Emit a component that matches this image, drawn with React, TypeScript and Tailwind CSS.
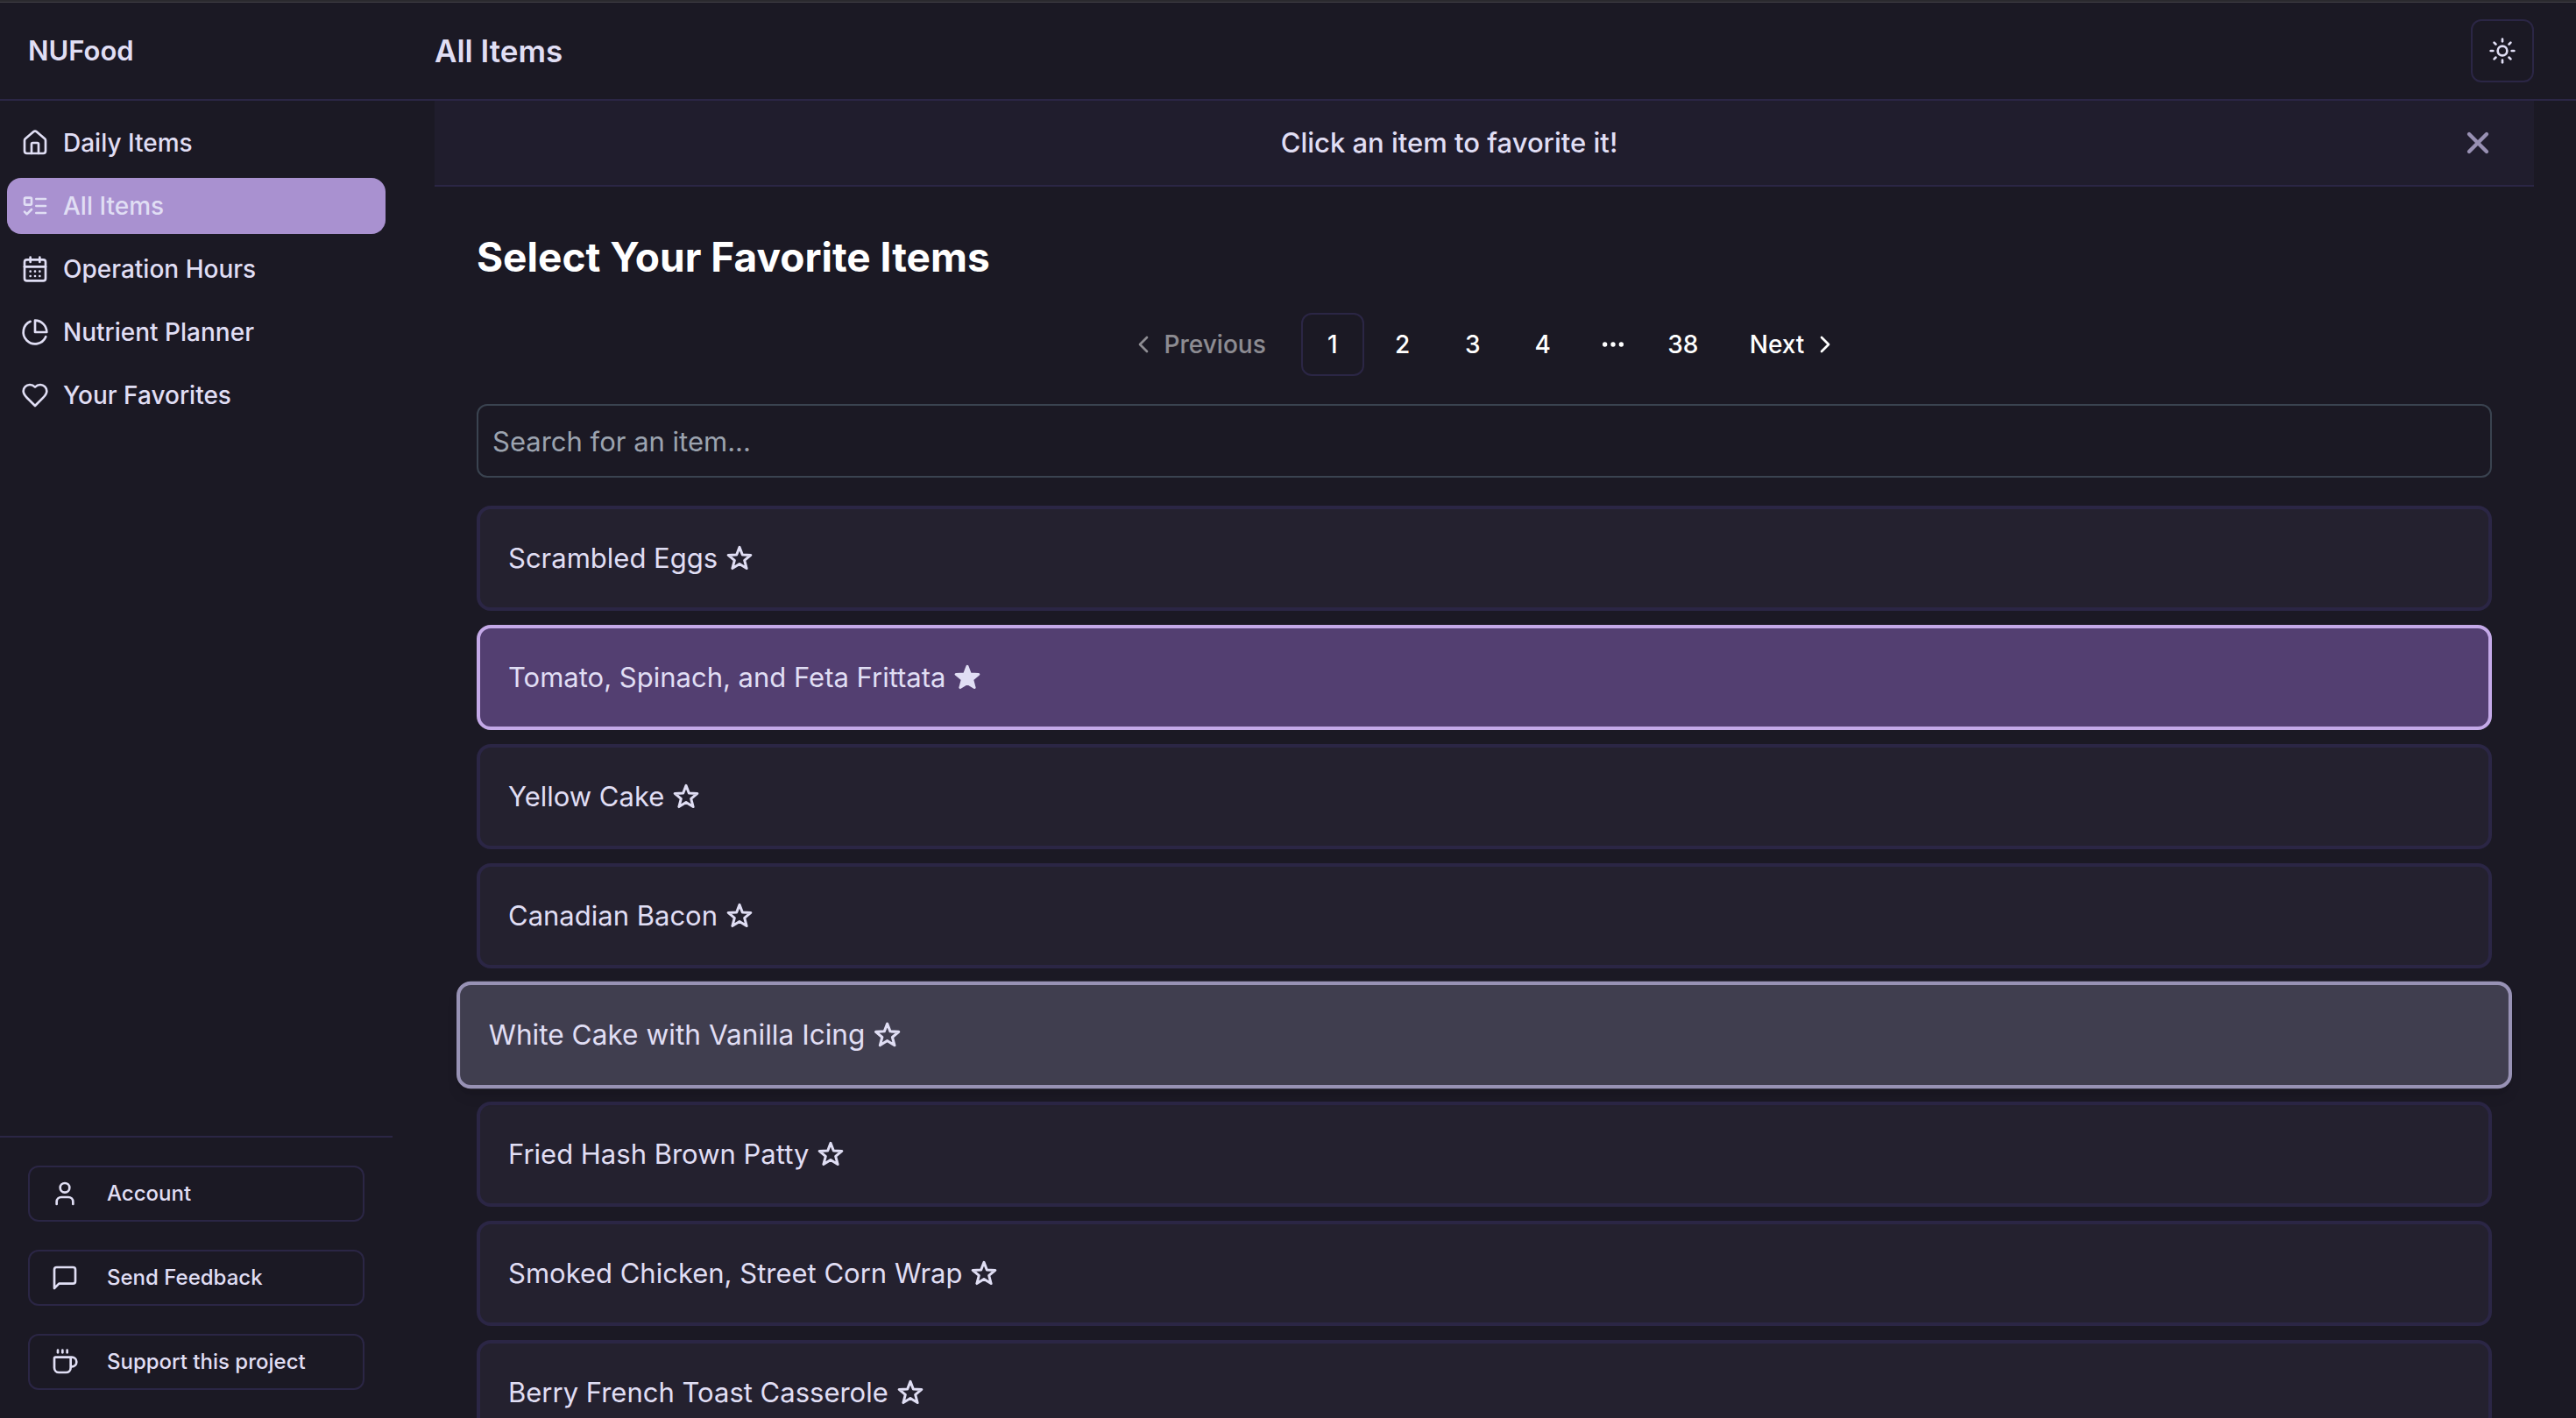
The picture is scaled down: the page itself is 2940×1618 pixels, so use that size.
import { useState, type ComponentType, type ReactNode } from "react";
import {
  CalendarDays,
  ChevronLeft,
  ChevronRight,
  Coffee,
  Ellipsis,
  House,
  Sun,
  User,
  X,
} from "lucide-react";

type IconType = ComponentType<{ className?: string }>;

function Outline({ className, children }: { className?: string; children: ReactNode }) {
  return (
    <svg
      viewBox="0 0 24 24"
      fill="none"
      stroke="currentColor"
      strokeWidth={2}
      strokeLinecap="round"
      strokeLinejoin="round"
      aria-hidden="true"
      className={className}
    >
      {children}
    </svg>
  );
}

const ListTodo: IconType = ({ className }) => (
  <Outline className={className}>
    <rect x="3" y="5" width="6" height="6" rx="1" />
    <path d="m3 17 2 2 4-4" />
    <path d="M13 6h8" />
    <path d="M13 12h8" />
    <path d="M13 18h8" />
  </Outline>
);

const Pie: IconType = ({ className }) => (
  <Outline className={className}>
    <path d="M21.21 15.89A10 10 0 1 1 8 2.83" />
    <path d="M22 12A10 10 0 0 0 12 2v10z" />
  </Outline>
);

const Heart: IconType = ({ className }) => (
  <Outline className={className}>
    <path d="M19 14c1.49-1.46 3-3.21 3-5.5A5.5 5.5 0 0 0 16.5 3c-1.76 0-3 .5-4.5 2-1.5-1.5-2.74-2-4.5-2A5.5 5.5 0 0 0 2 8.5c0 2.3 1.5 4.05 3 5.5l7 7Z" />
  </Outline>
);

const Message: IconType = ({ className }) => (
  <Outline className={className}>
    <path d="M21 15a2 2 0 0 1-2 2H7l-4 4V5a2 2 0 0 1 2-2h14a2 2 0 0 1 2 2z" />
  </Outline>
);

function Star({ filled }: { filled: boolean }) {
  return (
    <svg
      viewBox="0 0 28 28"
      fill={filled ? "currentColor" : "none"}
      stroke="currentColor"
      strokeWidth={2.8}
      strokeLinejoin="round"
      aria-hidden="true"
      className="size-[30px] shrink-0"
    >
      <path d="M14 2.2 17.1 10.2 26 10.7 19.3 16.3 21.6 24.8 14 20 6.4 24.8 8.7 16.3 2 10.7 10.9 10.2Z" />
    </svg>
  );
}

const navItems: { label: string; icon: IconType; active?: boolean }[] = [
  { label: "Daily Items", icon: House },
  { label: "All Items", icon: ListTodo, active: true },
  { label: "Operation Hours", icon: CalendarDays },
  { label: "Nutrient Planner", icon: Pie },
  { label: "Your Favorites", icon: Heart },
];

const footerItems: { label: string; icon: IconType }[] = [
  { label: "Account", icon: User },
  { label: "Send Feedback", icon: Message },
  { label: "Support this project", icon: Coffee },
];

const foods = [
  "Scrambled Eggs",
  "Tomato, Spinach, and Feta Frittata",
  "Yellow Cake",
  "Canadian Bacon",
  "White Cake with Vanilla Icing",
  "Fried Hash Brown Patty",
  "Smoked Chicken, Street Corn Wrap",
  "Berry French Toast Casserole",
];

const rowBase =
  "flex h-[120px] w-full items-center gap-[10px] rounded-2xl border-4 px-8 text-left text-[31px] leading-[48px]";
const rowPlain = "border-[#2b2645] bg-[#24212f]";
const rowFavorite = "border-[#c4a9e8] bg-[#533f71]";
const rowHighlighted = "z-10 scale-[1.02] border-[#9892b5] bg-[#403e4f] shadow-lg";

export default function App() {
  const [favorites, setFavorites] = useState(["Tomato, Spinach, and Feta Frittata"]);
  const [highlighted, setHighlighted] = useState("White Cake with Vanilla Icing");
  const [query, setQuery] = useState("");
  const [bannerOpen, setBannerOpen] = useState(true);

  const toggle = (food: string) =>
    setFavorites((list) =>
      list.includes(food) ? list.filter((f) => f !== food) : [...list, food],
    );
  const visible = foods.filter((f) => f.toLowerCase().includes(query.toLowerCase()));

  return (
    <div className="flex h-screen flex-col overflow-hidden border-t-2 border-[#2a292e] bg-[#1b1924] font-[Inter,'Liberation_Sans',sans-serif] text-[#e0def4]">
      <header className="flex shrink-0 items-center border-t border-b-2 border-t-[#414046] border-b-[#2b2645] py-[19px] pr-12">
        <a href="#home" className="w-[496px] shrink-0 pl-8 text-[31px] leading-[48px] font-semibold">
          NUFood
        </a>
        <h1 className="flex-1 text-[35px] leading-[48px] font-semibold">All Items</h1>
        <button
          type="button"
          aria-label="Toggle theme"
          className="flex size-[72px] items-center justify-center rounded-xl border-2 border-[#2b2645]"
        >
          <Sun className="size-8" />
        </button>
      </header>

      <div className="flex min-h-0 flex-1">
        <aside className="flex w-[448px] shrink-0 flex-col justify-between">
          <nav className="flex flex-col gap-2 px-2 py-4">
            {navItems.map(({ label, icon: Icon, active }) => (
              <a
                key={label}
                href="#nav"
                aria-current={active ? "page" : undefined}
                className={
                  active
                    ? "flex h-16 items-center gap-4 rounded-2xl bg-[#a991d0] px-4 text-[28px] font-medium"
                    : "flex h-16 items-center gap-4 rounded-2xl px-4 text-[28px] font-medium"
                }
              >
                <Icon className="size-8" />
                {label}
              </a>
            ))}
          </nav>
          <div className="flex flex-col gap-8 border-t-2 border-[#2b2645] p-8">
            {footerItems.map(({ label, icon: Icon }) => (
              <button
                key={label}
                type="button"
                className="flex h-16 items-center gap-8 rounded-xl border-2 border-[#2b2645] px-6 text-[24px] font-medium"
              >
                <Icon className="size-8" />
                {label}
              </button>
            ))}
          </div>
        </aside>

        <main className="min-w-0 flex-1 overflow-y-auto px-12 [scrollbar-width:none]">
          {bannerOpen && (
            <div className="flex h-[98px] items-center gap-4 border-b-2 border-[#2b2645] bg-[#201d2d] px-8">
              <p className="flex-1 text-center text-[31px] leading-[48px] font-medium">
                Click an item to favorite it!
              </p>
              <button
                type="button"
                aria-label="Dismiss"
                onClick={() => setBannerOpen(false)}
                className="flex size-16 items-center justify-center text-[#9890b3]"
              >
                <X className="size-10" strokeWidth={2.6} />
              </button>
            </div>
          )}

          <section className="p-12">
            <h2 className="mb-8 text-[46px] leading-[64px] font-bold text-white">
              Select Your Favorite Items
            </h2>

            <nav
              aria-label="Pagination"
              className="mb-8 flex items-center justify-center gap-2 text-[28px] font-medium text-white"
            >
              <a
                href="#previous"
                aria-disabled="true"
                className="flex h-[72px] items-center gap-2 pr-8 pl-5 opacity-50"
              >
                <ChevronLeft className="size-8" />
                Previous
              </a>
              <a
                href="#page-1"
                aria-current="page"
                className="flex size-[72px] items-center justify-center rounded-xl border-2 border-[#2b2645]"
              >
                1
              </a>
              {["2", "3", "4"].map((page) => (
                <a
                  key={page}
                  href="#page"
                  className="flex size-[72px] items-center justify-center"
                >
                  {page}
                </a>
              ))}
              <span className="flex size-[72px] items-center justify-center">
                <Ellipsis className="size-8" />
              </span>
              <a href="#page-38" className="flex size-[72px] items-center justify-center">
                38
              </a>
              <a href="#next" className="flex h-[72px] items-center gap-2 pr-5 pl-8">
                Next
                <ChevronRight className="size-8" />
              </a>
            </nav>

            <input
              type="text"
              aria-label="Search for an item"
              placeholder="Search for an item..."
              value={query}
              onChange={(e) => setQuery(e.target.value)}
              className="mb-8 block h-[84px] w-full rounded-xl border-2 border-[#3a4350] bg-transparent px-4 text-[31px] outline-none placeholder:text-[#9ca3af]"
            />

            <ul className="flex flex-col gap-4">
              {visible.map((food) => {
                const favorite = favorites.includes(food);
                const tone =
                  food === highlighted ? rowHighlighted : favorite ? rowFavorite : rowPlain;
                return (
                  <li key={food}>
                    <button
                      type="button"
                      aria-pressed={favorite}
                      onMouseEnter={() => setHighlighted(food)}
                      onClick={() => toggle(food)}
                      className={`${rowBase} ${tone}`}
                    >
                      {food}
                      <Star filled={favorite} />
                    </button>
                  </li>
                );
              })}
            </ul>
          </section>
        </main>
      </div>
    </div>
  );
}
